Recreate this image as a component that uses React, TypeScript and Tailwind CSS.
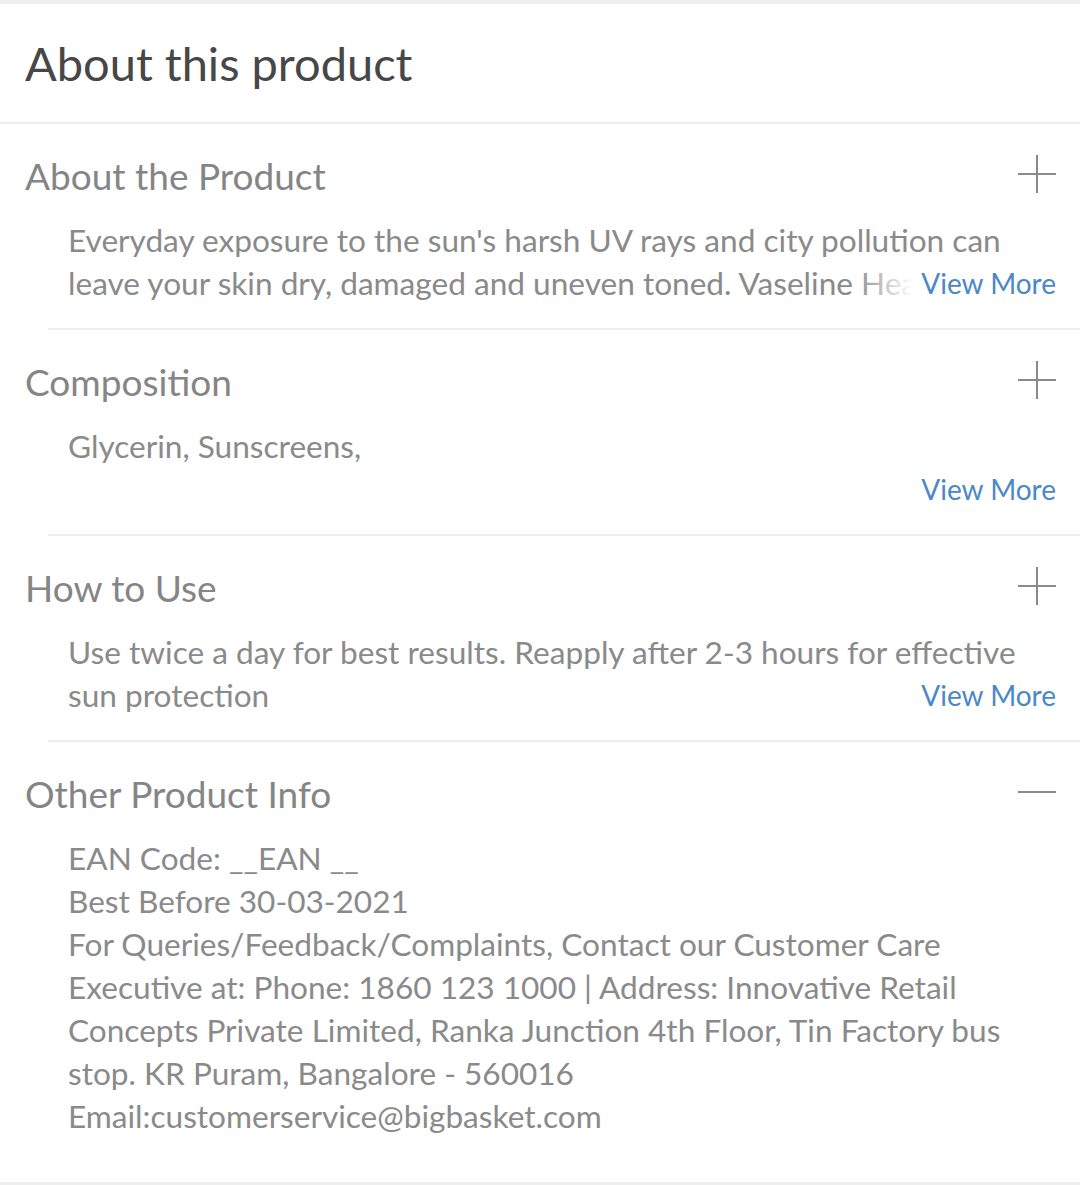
type Section = {
  title: string;
  body: string;
};

const SECTIONS: Section[] = [
  {
    title: 'About the Product',
    body: "Everyday exposure to the sun's harsh UV rays and city pollution can leave your skin dry, damaged and uneven toned. Vaseline Healthy White Sun + Pollution Protection Serum cream with SPF 24 PA++ protects your skin from sun damage and pollution.",
  },
  { title: 'Composition', body: 'Glycerin, Sunscreens,' },
  {
    title: 'How to Use',
    body: 'Use twice a day for best results. Reapply after 2-3 hours for effective sun protection',
  },
];

const OTHER_INFO = [
  'EAN Code: __EAN __',
  'Best Before 30-03-2021',
  'For Queries/Feedback/Complaints, Contact our Customer Care Executive at: Phone: 1860 123 1000 | Address: Innovative Retail Concepts Private Limited, Ranka Junction 4th Floor, Tin Factory bus stop. KR Puram, Bangalore - 560016',
  'Email:customerservice@bigbasket.com',
];

function ToggleIcon({ open }: { open?: boolean }) {
  return (
    <svg width="38" height="38" viewBox="0 0 38 38" className="text-[#8a8a8a] -mt-[6px]">
      <line x1="0" y1="19" x2="38" y2="19" stroke="currentColor" strokeWidth="2" />
      {!open && <line x1="19" y1="0" x2="19" y2="38" stroke="currentColor" strokeWidth="2" />}
    </svg>
  );
}

function SectionHeader({ title, open }: { title: string; open?: boolean }) {
  return (
    <div className="flex items-center justify-between h-[50px]">
      <h3 className="text-[37px] leading-[50px] text-[#858585] font-normal -mt-[3px]">{title}</h3>
      <ToggleIcon open={open} />
    </div>
  );
}

export default function App() {
  return (
    <div
      className="w-[1080px] h-[1185px] bg-white flex flex-col"
      style={{ fontFamily: 'Lato, "Open Sans", sans-serif' }}
    >
      <div className="h-[4px] bg-[#eeeeee]" />

      {/* Title */}
      <div className="h-[118px] flex items-center px-[25px]">
        <h2 className="text-[47px] text-[#474747] font-normal">About this product</h2>
      </div>
      <div className="h-[2px] bg-[#eeeeee]" />

      {SECTIONS.map((s) => (
        <div key={s.title} className="pl-[25px]">
          <div className="pt-[28px] pr-[24px]">
            <SectionHeader title={s.title} />
            <div className="relative mt-[17px] ml-[43px] h-[86px]">
              <p className="text-[31.6px] leading-[43px] text-[#8a8a8a] line-clamp-2">{s.body}</p>
              {/* fade + link over the clamped text */}
              <div className="absolute right-0 bottom-0 flex h-[43px]">
                <div className="w-[60px] bg-gradient-to-r from-white/0 to-white" />
                <span className="bg-white pl-[8px] text-[28px] leading-[43px] text-[#4a88c7]">View More</span>
              </div>
            </div>
          </div>
          <div className="mt-[23px] ml-[23px] h-[2px] bg-[#eeeeee]" />
        </div>
      ))}

      {/* Other product info */}
      <div className="pl-[25px] pr-[24px] pt-[28px]">
        <SectionHeader title="Other Product Info" open />
        <div className="mt-[17px] ml-[43px] text-[31.6px] leading-[43px] text-[#8a8a8a]">
          {OTHER_INFO.map((l) => (
            <p key={l}>{l}</p>
          ))}
        </div>
      </div>

      <div className="flex-1" />
      <div className="h-[3px] bg-[#eeeeee]" />
    </div>
  );
}
